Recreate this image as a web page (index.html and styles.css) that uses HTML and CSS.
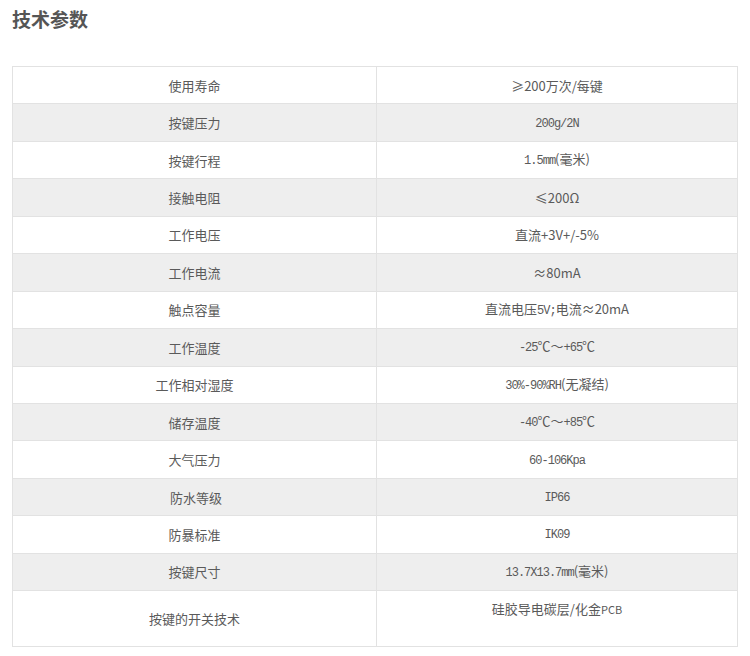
FILE: index.html
```html
<!DOCTYPE html>
<html lang="zh-CN">
<head>
<meta charset="utf-8">
<title>技术参数</title>
<link rel="stylesheet" href="styles.css">
</head>
<body>
<div class="page">
  <h2 class="title">技术参数</h2>
  <table class="spec">
    <tbody>
      <tr><td>使用寿命</td><td>≥200万次/每键</td></tr>
      <tr class="alt"><td>按键压力</td><td><span class="m">200g/2N</span></td></tr>
      <tr><td>按键行程</td><td><span class="m">1.5mm</span>(毫米)</td></tr>
      <tr class="alt"><td>接触电阻</td><td>≤200Ω</td></tr>
      <tr><td>工作电压</td><td>直流+3V+/-5%</td></tr>
      <tr class="alt"><td>工作电流</td><td>≈80mA</td></tr>
      <tr><td>触点容量</td><td>直流电压<span class="m">5V;</span>电流≈20mA</td></tr>
      <tr class="alt"><td>工作温度</td><td><span class="m">-25</span>℃～<span class="m">+65</span>℃</td></tr>
      <tr><td>工作相对湿度</td><td><span class="m">30%-90%RH</span>(无凝结)</td></tr>
      <tr class="alt"><td>储存温度</td><td><span class="m">-40</span>℃～<span class="m">+85</span>℃</td></tr>
      <tr><td>大气压力</td><td><span class="m">60-106Kpa</span></td></tr>
      <tr class="alt"><td>&nbsp;防水等级</td><td><span class="m">IP66</span></td></tr>
      <tr><td>防暴标准</td><td><span class="m">IK09</span></td></tr>
      <tr class="alt"><td>按键尺寸</td><td><span class="m">13.7X13.7mm</span>(毫米)</td></tr>
      <tr class="tall"><td>按键的开关技术</td><td>硅胶导电碳层/化金<span class="s">PCB</span><br>&nbsp;</td></tr>
    </tbody>
  </table>
</div>
</body>
</html>
```
FILE: styles.css
```css
html, body {
  margin: 0;
  padding: 0;
  background: #ffffff;
}
.page {
  padding: 0 12px;
  font-family: "Noto Sans CJK SC", "Noto Sans", sans-serif;
  color: #5a5a5a;
}
.title {
  margin: 0;
  padding-top: 7px;
  height: 66px;
  box-sizing: border-box;
  font-size: 19px;
  line-height: 24px;
  font-weight: bold;
  color: #555555;
}
.spec {
  width: 726px;
  border-collapse: collapse;
  table-layout: fixed;
  font-size: 13px;
  border: 1px solid #e2e2e2;
}
.spec tr {
  height: 37.45px;
}
.spec td {
  border: 1px solid #e2e2e2;
  text-align: center;
  vertical-align: middle;
  padding: 0 6px;
  line-height: 19px;
  color: #5a5a5a;
}
.spec td:first-child {
  width: 351px;
}
.spec tr.alt td {
  background: #eeeeee;
}
.spec tr.tall {
  height: 56px;
}
.m {
  font-family: "Liberation Mono", "DejaVu Sans Mono", monospace;
  font-size: 12px;
  letter-spacing: -1px;
}
.s {
  font-size: 11px;
}
```
